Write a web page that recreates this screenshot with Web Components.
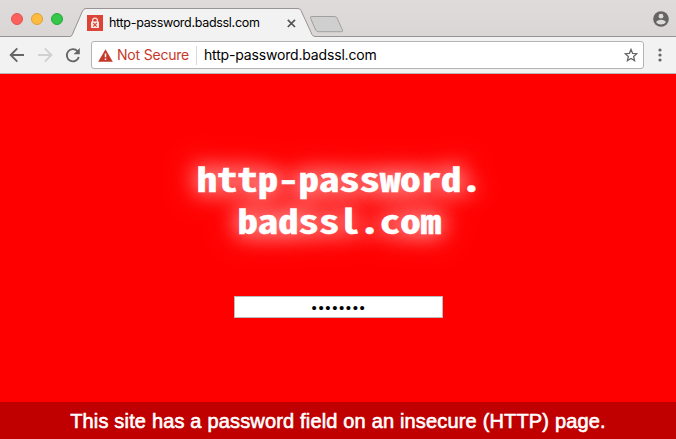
<!DOCTYPE html>
<html lang="en"><head><meta charset="utf-8"><title>http-password.badssl.com</title>
<style>html,body{margin:0;height:100%;overflow:hidden}</style></head><body>
<browser-window>
<tab-strip slot="tabs"><span>http-password.badssl.com</span></tab-strip>
<nav-toolbar slot="toolbar"><span slot="status">Not Secure</span><span>http-password.badssl.com</span></nav-toolbar>
<site-page><span slot="host">http-password.
badssl.com</span><span slot="note">This site has a password field on an insecure (HTTP) page.</span></site-page>
</browser-window>
<script>
class BaseElement extends HTMLElement{
  constructor(){super();this.attachShadow({mode:'open'}).innerHTML=this.constructor.markup}
}
customElements.define('browser-window',class extends BaseElement{static markup=`
<style>:host{display:grid;grid-template-rows:37px 37px 1fr;width:676px;height:439px;font-family:Inter,"Liberation Sans",sans-serif}</style>
<slot name="tabs"></slot><slot name="toolbar"></slot><slot></slot>`});

customElements.define('tab-strip',class extends BaseElement{static markup=`
<style>
:host{display:flex;position:relative;box-sizing:border-box;height:37px;background:linear-gradient(#dfdbdb,#dbd6d6);align-items:center;color:#000}
.shape{position:absolute;inset:0}
.row{position:relative;display:flex;align-items:center;width:100%;height:37px}
.lights{display:flex;gap:8px;margin-left:11px}
.lights i{width:12px;height:12px;border-radius:50%;box-sizing:border-box}
.fav{margin:8px 0 0 24px;flex:none}
.title{margin:9px 0 0 6px;width:178px;font-size:12.5px;line-height:18px;letter-spacing:-.3px;white-space:nowrap}
.close{margin-top:9px}
.person{margin-left:auto;margin-right:7px}
</style>
<svg class="shape" width="676" height="37"><path d="M0 36.5H71C72 36.5 72.3 35.5 73 34L82.5 11Q84 8.5 86 8.5H298Q300 8.5 301 10.5L312 34.5Q313 36.5 315 36.5H676V37H0Z" fill="#f2f2f2"/><path d="M0 36.5H70Q71.5 36.5 72.3 34.5L82.5 11Q83.7 8.5 86 8.5H298Q300 8.5 301 10.5L312 34.5Q313 36.5 315 36.5H676" fill="none" stroke="#999494"/><path d="M312 16.5H334.5Q336.5 16.5 337.2 18.2L342.4 30Q343.3 31.7 341.5 31.7H318.5Q316.5 31.7 315.7 30L310.6 18.3Q309.8 16.5 312 16.5Z" fill="#cfcfcf" stroke="#a39f9f"/></svg>
<div class="row"><div class="lights"><i style="background:#fc615d;border:1px solid #e5524e"></i><i style="background:#fdbc40;border:1px solid #dfa034"></i><i style="background:#34c749;border:1px solid #25aa35"></i></div>
<svg class="fav" width="16" height="16"><path d="M0 0h16v16H0z" fill="#dc4437"/><path d="M5.6 7V5.6a2.4 2.4 0 0 1 4.8 0V7" fill="none" stroke="#fbe3e0" stroke-width="1.2"/><rect x="4" y="6.5" width="8" height="6.5" rx=".7" fill="#fbe9e7"/><path d="M6.2 8l3.6 3.7M9.8 8l-3.6 3.7" stroke="#dc4437" stroke-width="1.1"/></svg>
<div class="title"><slot></slot></div>
<svg class="close" width="9" height="9"><path d="M.8.8l7.2 7.2M8 .8L.8 8" stroke="#555" stroke-width="1.7"/></svg>
<svg class="person" width="16" height="16"><circle cx="8" cy="8" r="7.8" fill="#656363"/><circle cx="8" cy="5.2" r="2.4" fill="#dedada"/><path d="M3.2 11.2C3.5 7.8 12.5 7.8 12.8 11.2C10.7 14.2 5.3 14.2 3.2 11.2Z" fill="#dedada"/></svg></div>`});

customElements.define('nav-toolbar',class extends BaseElement{static markup=`
<style>
:host{display:flex;box-sizing:border-box;height:37px;background:#f2f2f2;border-bottom:1px solid #b8b6b6;align-items:center;font-size:14px;line-height:20px}
.icons{display:flex;width:91px;flex:none}
.box{display:flex;align-items:center;box-sizing:border-box;width:553px;height:28px;background:#fff;border:1px solid #b5b3b3;border-radius:3px;flex:none;padding-left:6px;white-space:nowrap;color:#000}
.status{width:78px;margin-left:4px;color:#c5392b;letter-spacing:-.2px}
.sep{width:1px;height:19px;background:#dadada;margin-left:1px}
.url{margin-left:7px;letter-spacing:-.17px}
.star{margin-left:auto;margin-right:5px}
.dots{margin-left:13px}
</style>
<div class="icons"><svg width="91" height="28"><g fill="none" stroke-width="1.9"><path d="M24 14H11M17.3 7.4L10.7 14l6.6 6.6" stroke="#666"/><path d="M38 14h13M44.8 7.4l6.6 6.6-6.6 6.6" stroke="#d0d0d0"/><path d="M77.5 10.2A6.1 6.1 0 1 0 78.8 16" stroke="#666"/></g><path d="M79.8 7v6.2h-6.2Z" fill="#666"/></svg></div>
<div class="box"><svg width="15" height="13"><path d="M7.5.3L14.8 12.7H.2Z" fill="#c5392b"/><path d="M7.5 4.6v3.7M7.5 9.5v1.6" stroke="#fff" stroke-width="1.5"/></svg><span class="status"><slot name="status"></slot></span><i class="sep"></i><span class="url"><slot></slot></span>
<svg class="star" width="14" height="14"><path d="M7 1.4l1.6 3.9 4.3.4-3.3 2.8 1 4.1L7 10.4l-3.6 2.2 1-4.1L1.1 5.7l4.3-.4Z" fill="none" stroke="#666" stroke-width="1.3"/></svg></div>
<svg class="dots" width="6" height="16" fill="#666"><circle cx="3" cy="3" r="1.6"/><circle cx="3" cy="8" r="1.6"/><circle cx="3" cy="13" r="1.6"/></svg>`});

customElements.define('site-page',class extends BaseElement{static markup=`
<style>
:host{display:flex;flex-direction:column;align-items:center;background:#f00;height:365px;box-sizing:border-box;color:#fff}
h1{margin:83px 0 0 2px;font:bold 33.5px/42px "Noto Sans Mono CJK JP","DejaVu Sans Mono",monospace;-webkit-text-stroke:.5px #fff;text-shadow:0 0 20px #fff,0 0 34px rgba(255,255,255,.45);text-align:center;height:84px;white-space:pre;transform:scaleX(1.215)}
input{box-sizing:border-box;width:209px;height:22px;margin:55px 0 0;border:1px solid #bbb;padding:1px 0 0 2px;text-align:center;background:#fff;color:#000;font:15px/20px "Liberation Sans",sans-serif;letter-spacing:1.6px;outline:0}
footer{margin-top:auto;width:100%;height:37px;background:#c00000;text-align:center;font:20px/39px "Liberation Sans",Arial,sans-serif;letter-spacing:.17px;-webkit-text-stroke:.6px #fff;white-space:nowrap}
</style>
<h1><slot name="host"></slot></h1>
<input type="password" value="password" aria-label="Password">
<footer><slot name="note"></slot></footer>`});
</script></body></html>
